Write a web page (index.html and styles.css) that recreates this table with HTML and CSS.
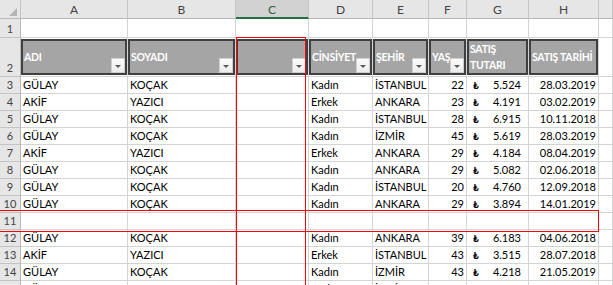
FILE: index.html
```html
<!DOCTYPE html>
<html lang="tr">
<head>
<meta charset="utf-8">
<title>Sheet</title>
<link rel="stylesheet" href="styles.css">
</head>
<body>
<div class="sheet">
  <div class="grid">
    <!-- column headers -->
    <div class="ch corner"><svg width="8" height="8" viewBox="0 0 8 8"><polygon points="8,0 8,8 0,8" fill="#b5b5b5"/></svg></div>
    <div class="ch">A</div>
    <div class="ch">B</div>
    <div class="ch sel">C</div>
    <div class="ch">D</div>
    <div class="ch">E</div>
    <div class="ch">F</div>
    <div class="ch">G</div>
    <div class="ch">H</div>
    <div class="ch"></div>

    <!-- row 1 -->
    <div class="rh">1</div>
    <div class="c"></div><div class="c"></div><div class="c"></div><div class="c"></div><div class="c"></div><div class="c"></div><div class="c"></div><div class="c"></div><div class="c"></div>

    <!-- row 2: table header -->
    <div class="rh">2</div>
    <div class="th"><div class="tbox"><span class="tt">ADI</span><span class="dd"></span></div></div>
    <div class="th"><div class="tbox"><span class="tt">SOYADI</span><span class="dd"></span></div></div>
    <div class="th"><div class="tbox"><span class="tt"></span><span class="dd"></span></div></div>
    <div class="th"><div class="tbox"><span class="tt">CİNSİYET</span><span class="dd"></span></div></div>
    <div class="th"><div class="tbox"><span class="tt">ŞEHİR</span><span class="dd"></span></div></div>
    <div class="th"><div class="tbox"><span class="tt">YAŞ</span><span class="dd"></span></div></div>
    <div class="th"><div class="tbox"><span class="tt wrap">SATIŞ TUTARI</span></div></div>
    <div class="th"><div class="tbox"><span class="tt">SATIŞ TARİHİ</span></div></div>
    <div class="c"></div>

    <!-- row 3 -->
    <div class="rh">3</div>
    <div class="c">GÜLAY</div><div class="c">KOÇAK</div><div class="c"></div><div class="c">Kadın</div><div class="c">İSTANBUL</div><div class="c r">22</div><div class="c acc"><span>₺</span><span>5.524</span></div><div class="c r">28.03.2019</div><div class="c"></div>
    <!-- row 4 -->
    <div class="rh">4</div>
    <div class="c">AKİF</div><div class="c">YAZICI</div><div class="c"></div><div class="c">Erkek</div><div class="c">ANKARA</div><div class="c r">23</div><div class="c acc"><span>₺</span><span>4.191</span></div><div class="c r">03.02.2019</div><div class="c"></div>
    <!-- row 5 -->
    <div class="rh">5</div>
    <div class="c">GÜLAY</div><div class="c">KOÇAK</div><div class="c"></div><div class="c">Kadın</div><div class="c">İSTANBUL</div><div class="c r">28</div><div class="c acc"><span>₺</span><span>6.915</span></div><div class="c r">10.11.2018</div><div class="c"></div>
    <!-- row 6 -->
    <div class="rh">6</div>
    <div class="c">GÜLAY</div><div class="c">KOÇAK</div><div class="c"></div><div class="c">Kadın</div><div class="c">İZMİR</div><div class="c r">45</div><div class="c acc"><span>₺</span><span>5.619</span></div><div class="c r">28.03.2019</div><div class="c"></div>
    <!-- row 7 -->
    <div class="rh">7</div>
    <div class="c">AKİF</div><div class="c">YAZICI</div><div class="c"></div><div class="c">Erkek</div><div class="c">ANKARA</div><div class="c r">29</div><div class="c acc"><span>₺</span><span>4.184</span></div><div class="c r">08.04.2019</div><div class="c"></div>
    <!-- row 8 -->
    <div class="rh">8</div>
    <div class="c">GÜLAY</div><div class="c">KOÇAK</div><div class="c"></div><div class="c">Kadın</div><div class="c">ANKARA</div><div class="c r">29</div><div class="c acc"><span>₺</span><span>5.082</span></div><div class="c r">02.06.2018</div><div class="c"></div>
    <!-- row 9 -->
    <div class="rh">9</div>
    <div class="c">GÜLAY</div><div class="c">KOÇAK</div><div class="c"></div><div class="c">Kadın</div><div class="c">İSTANBUL</div><div class="c r">20</div><div class="c acc"><span>₺</span><span>4.760</span></div><div class="c r">12.09.2018</div><div class="c"></div>
    <!-- row 10 -->
    <div class="rh">10</div>
    <div class="c">GÜLAY</div><div class="c">KOÇAK</div><div class="c"></div><div class="c">Kadın</div><div class="c">ANKARA</div><div class="c r">29</div><div class="c acc"><span>₺</span><span>3.894</span></div><div class="c r">14.01.2019</div><div class="c"></div>
    <!-- row 11 -->
    <div class="rh">11</div>
    <div class="c"></div><div class="c"></div><div class="c"></div><div class="c"></div><div class="c"></div><div class="c"></div><div class="c"></div><div class="c"></div><div class="c"></div>
    <!-- row 12 -->
    <div class="rh">12</div>
    <div class="c">GÜLAY</div><div class="c">KOÇAK</div><div class="c"></div><div class="c">Kadın</div><div class="c">ANKARA</div><div class="c r">39</div><div class="c acc"><span>₺</span><span>6.183</span></div><div class="c r">04.06.2018</div><div class="c"></div>
    <!-- row 13 -->
    <div class="rh">13</div>
    <div class="c">AKİF</div><div class="c">YAZICI</div><div class="c"></div><div class="c">Erkek</div><div class="c">İSTANBUL</div><div class="c r">43</div><div class="c acc"><span>₺</span><span>3.515</span></div><div class="c r">28.07.2018</div><div class="c"></div>
    <!-- row 14 -->
    <div class="rh">14</div>
    <div class="c">GÜLAY</div><div class="c">KOÇAK</div><div class="c"></div><div class="c">Kadın</div><div class="c">İZMİR</div><div class="c r">43</div><div class="c acc"><span>₺</span><span>4.218</span></div><div class="c r">21.05.2019</div><div class="c"></div>
    <!-- row 15 -->
    <div class="rh">15</div>
    <div class="c">GÜLAY</div><div class="c">KOÇAK</div><div class="c"></div><div class="c">Kadın</div><div class="c">İZMİR</div><div class="c r">31</div><div class="c acc"><span>₺</span><span>5.300</span></div><div class="c r">11.02.2019</div><div class="c"></div>
  </div>

  <!-- red annotation outlines drawn over the sheet -->
  <div class="mark mark-col"></div>
  <div class="mark mark-row"></div>
</div>
</body>
</html>
```

FILE: styles.css
```css
* { box-sizing: border-box; }

html, body {
  margin: 0;
  height: 100%;
  overflow: hidden;
  background: #ffffff;
}

body {
  font-family: Lato, "Noto Sans", "DejaVu Sans", sans-serif;
  font-size: 11px;
  color: #000000;
}

.sheet {
  position: relative;
  width: 613px;
}

.grid {
  display: grid;
  grid-template-columns: 21px 107px 108px 73px 64px 56px 38px 62px 70px 14px;
  grid-template-rows: 19px 19px 39px repeat(13, 17px);
}

.grid > div {
  min-width: 0;
  overflow: hidden;
  white-space: nowrap;
  border-right: 1px solid #d4d4d4;
  border-bottom: 1px solid #d4d4d4;
  display: flex;
  align-items: flex-end;
  line-height: 16px;
  padding: 0 2px;
}

/* column headers */
.grid > .ch {
  background: #e6e6e6;
  border-right-color: #c4c4c4;
  border-bottom-color: #b8b8b8;
  justify-content: center;
  align-items: flex-start;
  color: #444444;
  font-size: 12px;
  line-height: 20px;
}

.grid > .ch.sel {
  background: #d2d2d2;
  border-bottom: 2px solid #217346;
  color: #2e5e43;
}

.grid > .corner {
  justify-content: flex-end;
  align-items: flex-end;
  padding: 0 3px 2px 0;
}

.corner svg { display: block; }

/* row headers */
.grid > .rh {
  background: #e6e6e6;
  border-right-color: #b8b8b8;
  border-bottom-color: #c4c4c4;
  justify-content: center;
  color: #444444;
  font-size: 11px;
  padding: 0;
}

/* data cells */
.grid > .r { justify-content: flex-end; padding-right: 2px; }

.grid > .acc {
  justify-content: space-between;
  padding: 0 7px 0 6px;
}

.acc span:first-child { font-size: 10px; font-weight: bold; }

/* table header row */
.grid > .th {
  padding: 1px 0 1px 0;
  align-items: stretch;
}

.tbox {
  flex: 1;
  display: flex;
  min-width: 0;
  background: #a5a5a5;
  border: 2px solid #404040;
  color: #ffffff;
  font-weight: bold;
  font-size: 10.5px;
  letter-spacing: -0.25px;
}

.tt {
  flex: 1 0 100%;
  min-width: 0;
  align-self: center;
  padding-left: 1px;
  overflow: visible;
  white-space: nowrap;
  line-height: 16px;
}

.tt.wrap { white-space: normal; }

.dd {
  flex: none;
  width: 14px;
  height: 15px;
  margin-left: -14px;
  align-self: flex-end;
  background: linear-gradient(#fbfbfb, #ececec);
  border: 1px solid #cfcfcf;
  display: flex;
  align-items: center;
  justify-content: center;
}

.dd::after {
  content: "";
  border-left: 3px solid transparent;
  border-right: 3px solid transparent;
  border-top: 3px solid #595959;
  margin-top: 2px;
}

/* red annotation outlines */
.mark {
  position: absolute;
  border: 1px solid #ff0000;
  pointer-events: none;
}

.mark-col {
  left: 236px;
  top: 37px;
  width: 70px;
  height: 270px;
}

.mark-row {
  left: -4px;
  top: 210px;
  width: 603px;
  height: 22px;
}
```
